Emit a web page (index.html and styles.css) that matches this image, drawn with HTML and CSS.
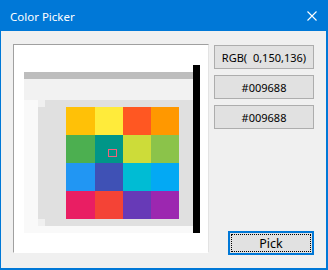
FILE: index.html
```html
<!DOCTYPE html>
<html>
<head>
    <meta charset="UTF-8">
    <title>Color Picker</title>
    <link rel="stylesheet" href="styles.css">
</head>
<body>
    <div class="window">
        <div class="titlebar">
            <span class="title">Color Picker</span>
            <svg class="close" width="10" height="10" viewBox="0 0 10 10">
                <path d="M0.5 0.5L9.5 9.5M9.5 0.5L0.5 9.5" stroke="#ffffff" stroke-width="1.1" fill="none"/>
            </svg>
        </div>
        <div class="content">
            <div class="picturebox">
                <div class="picture">
                    <div class="pic-main">
                        <div class="pic-top"></div>
                        <div class="pic-bar"></div>
                        <div class="pic-band"></div>
                        <div class="pic-row">
                            <div class="pic-left"></div>
                            <div class="pic-edge">
                                <div class="edge-light"></div>
                                <div class="edge-gray"></div>
                                <div class="edge-light"></div>
                            </div>
                            <div class="pic-panel">
                                <div class="swatches">
                                    <div class="sw" style="background:#ffc107"></div>
                                    <div class="sw" style="background:#ffeb3b"></div>
                                    <div class="sw" style="background:#ff5722"></div>
                                    <div class="sw" style="background:#ff9800"></div>
                                    <div class="sw" style="background:#4caf50"></div>
                                    <div class="sw selected" style="background:#009688"><span class="marker"></span></div>
                                    <div class="sw" style="background:#cddc39"></div>
                                    <div class="sw" style="background:#8bc34a"></div>
                                    <div class="sw" style="background:#2196f3"></div>
                                    <div class="sw" style="background:#3f51b5"></div>
                                    <div class="sw" style="background:#00bcd4"></div>
                                    <div class="sw" style="background:#03a9f4"></div>
                                    <div class="sw" style="background:#e91e63"></div>
                                    <div class="sw" style="background:#f44336"></div>
                                    <div class="sw" style="background:#673ab7"></div>
                                    <div class="sw" style="background:#9c27b0"></div>
                                </div>
                            </div>
                        </div>
                        <div class="pic-bottom"></div>
                    </div>
                    <div class="pic-black"></div>
                </div>
            </div>
            <div class="buttons">
                <button type="button" class="btn rgb">RGB(  0,150,136)</button>
                <button type="button" class="btn">#009688</button>
                <button type="button" class="btn">#009688</button>
                <button type="button" class="btn pick"><span class="focus">Pick</span></button>
            </div>
        </div>
    </div>
</body>
</html>
```

FILE: styles.css
```css
html, body{margin: 0; padding: 0;}
body{font: 12px "Noto Sans", "Liberation Sans", sans-serif; background-color: #f0f0f0;}

.window{
    width: 328px;
    height: 270px;
    box-sizing: border-box;
    border: 1px solid #0078d7;
    border-right-width: 2px;
    border-bottom-width: 2px;
    border-top: none;
    display: flex;
    flex-direction: column;
    background-color: #f0f0f0;
}
.titlebar{
    height: 31px;
    background-color: #0078d7;
    color: #ffffff;
    display: flex;
    align-items: center;
    padding: 0 9px 0 9px;
    flex-shrink: 0;
}
.title{flex: 1; font-size: 11.5px; margin-top: 1px;}

.content{
    flex: 1;
    display: flex;
    padding: 13px 11px 0 12px;
    gap: 5px;
}

.picturebox{
    width: 196px;
    height: 209px;
    box-sizing: border-box;
    border-top: 1px solid #a0a0a0;
    border-left: 1px solid #a0a0a0;
    border-right: 1px solid #e3e3e3;
    border-bottom: 1px solid #ffffff;
    background-color: #ffffff;
    padding: 20px 0 0 10px;
}
.picture{display: flex;}
.pic-main{width: 169px; display: flex; flex-direction: column;}
.pic-top{height: 7px;}
.pic-bar{height: 7px; background-color: #bdbdbd;}
.pic-band{height: 21px; background-color: #f2f2f2;}
.pic-row{height: 126px; display: flex;}
.pic-left{width: 14px; background-color: #f9f9f9;}
.pic-edge{width: 7px; display: flex; flex-direction: column;}
.edge-light{height: 7px; background-color: #f0f0f0;}
.edge-gray{flex: 1; background-color: #e0e0e0;}
.pic-panel{flex: 1; background-color: #e0e0e0; padding: 7px 14px 7px 21px;}
.pic-bottom{height: 7px; background-color: #f9f9f9;}
.pic-black{width: 7px; height: 168px; background-color: #000000;}

.swatches{
    display: grid;
    grid-template-columns: 29px 28px 28px 28px;
    grid-template-rows: 28px 28px 28px 28px;
}
.sw{position: relative;}
.marker{
    position: absolute;
    left: 13px;
    top: 14px;
    width: 7px;
    height: 6px;
    border: 1px solid #f2607c;
}

.buttons{
    width: 100px;
    display: flex;
    flex-direction: column;
    gap: 6px;
    padding-top: 1px;
}
.btn{
    height: 24px;
    width: 100px;
    border: 1px solid #adadad;
    background-color: #e1e1e1;
    font: 11px "Noto Sans", "Liberation Sans", sans-serif;
    color: #000000;
    padding: 0;
    margin: 0;
    white-space: pre;
}
.pick{
    margin-top: auto;
    margin-left: auto;
    width: 86px;
    border: 2px solid #0078d7;
    padding: 1px;
    margin-bottom: 13px;
    display: flex;
}
.focus{
    flex: 1;
    border: 1px dotted #000000;
    display: flex;
    align-items: center;
    justify-content: center;
    font-size: 12.5px;
}
```
